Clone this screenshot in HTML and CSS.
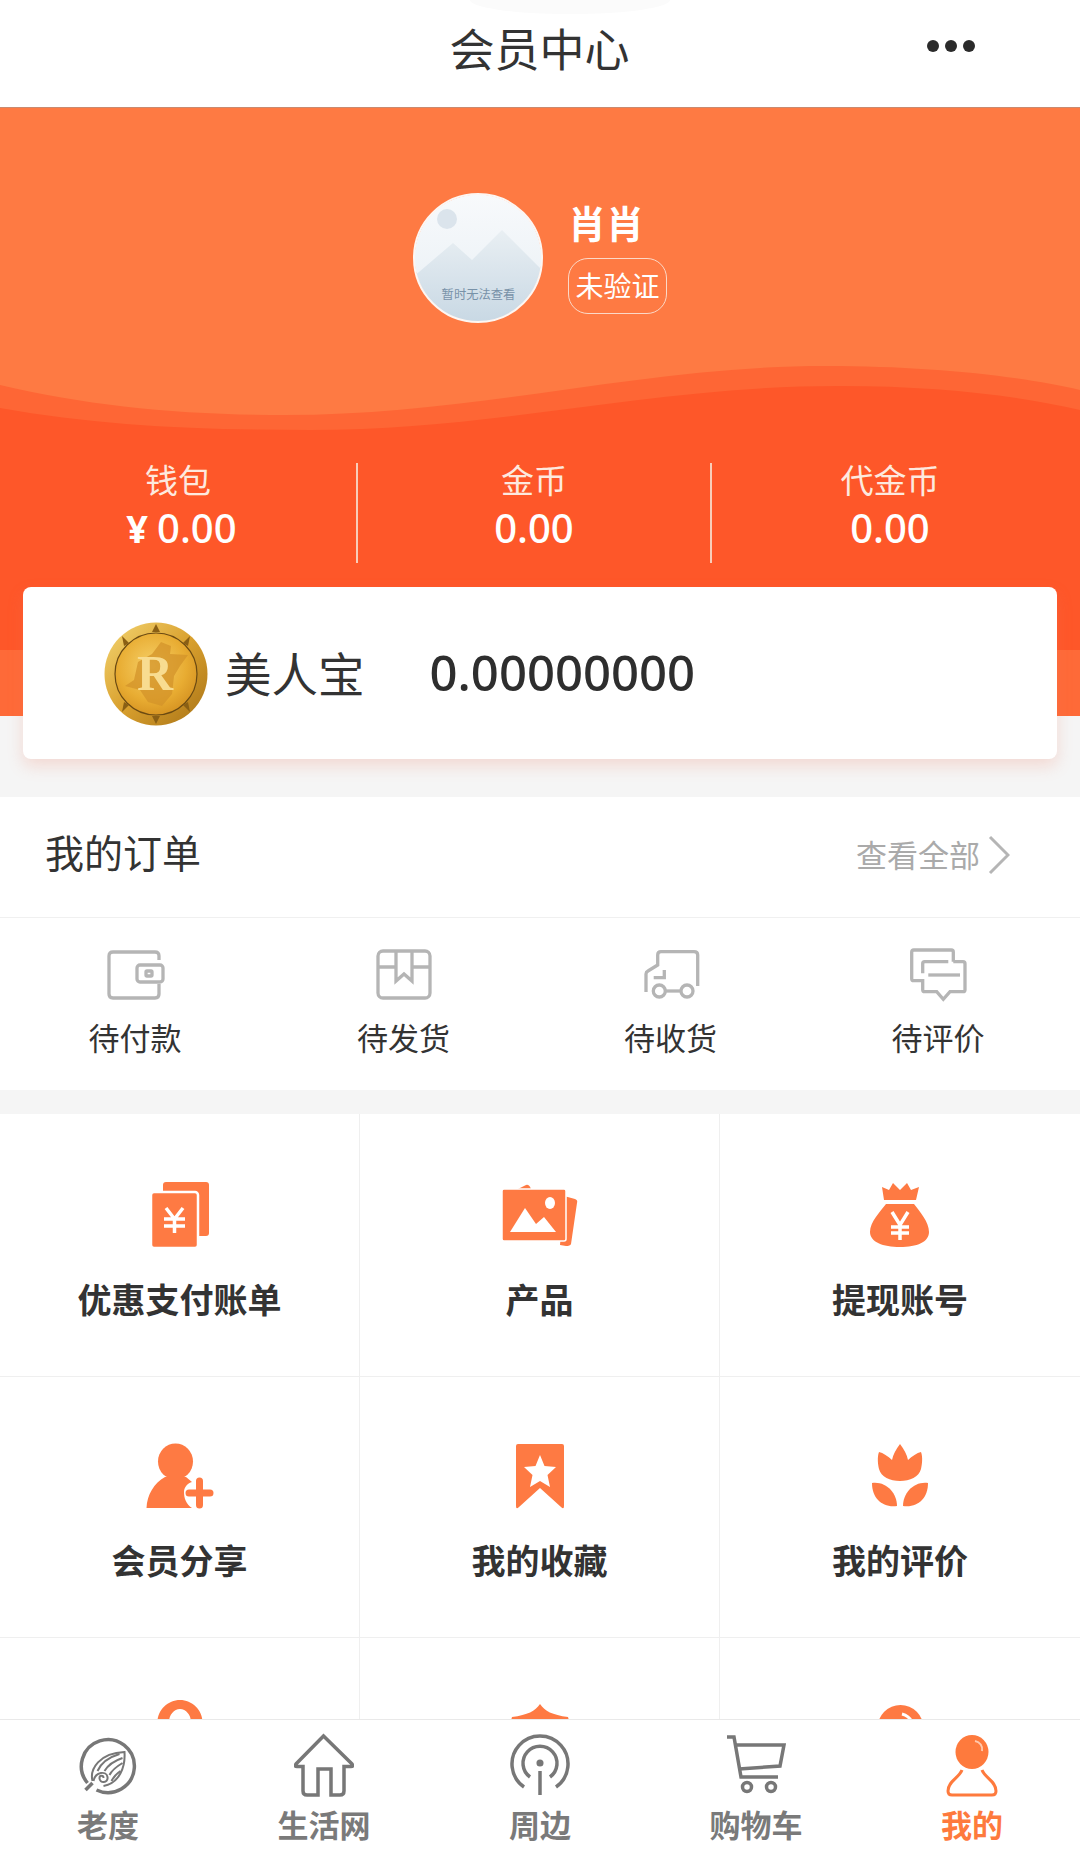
FILE: index.html
```html
<!DOCTYPE html>
<html lang="zh-CN">
<head>
<meta charset="utf-8">
<title>会员中心</title>
<link rel="stylesheet" href="styles.css">
</head>
<body>
<div class="app">
  <header class="topbar">
    <span></span>
    <h1 class="topbar-title">会员中心</h1>
    <div class="more"><i></i><i></i><i></i></div>
  </header>

  <section class="top">
    <svg class="hero-bg" viewBox="0 0 1080 608" preserveAspectRatio="none" aria-hidden="true">
      <rect width="1080" height="608" fill="#fe7a43"/>
      <path d="M0 277C90 298 180 307 285 307C480 307 640 258 826 258C930 258 1020 268 1080 282V608H0Z" fill="#fe6635"/>
      <path d="M0 300C100 318 200 322 310 322C500 322 650 278 840 278C940 278 1020 288 1080 302V608H0Z" fill="#fe5729"/>
      <rect y="542" width="1080" height="66" fill="#fe6a38"/>
    </svg>

    <div class="profile">
      <svg class="avatar" viewBox="0 0 130 130" aria-hidden="true">
        <defs>
          <linearGradient id="sky" x1="0" y1="0" x2="0" y2="1">
            <stop offset="0" stop-color="#f8fafc"/>
            <stop offset="0.6" stop-color="#eef3f7"/>
            <stop offset="1" stop-color="#dfe7ee"/>
          </linearGradient>
          <linearGradient id="hill" x1="0" y1="0" x2="0" y2="1">
            <stop offset="0" stop-color="#e9eff3"/>
            <stop offset="1" stop-color="#c8d8e4"/>
          </linearGradient>
          <clipPath id="round"><circle cx="65" cy="65" r="63.5"/></clipPath>
        </defs>
        <g clip-path="url(#round)">
          <rect width="130" height="130" fill="url(#sky)"/>
          <circle cx="34" cy="26" r="10" fill="#dbe4ec"/>
          <path d="M0 84L40 50L59 67L89 37L130 78V130H0Z" fill="url(#hill)"/>
          <text class="avatar-text" x="65.500" y="106" text-anchor="middle">暂时无法查看</text>
        </g>
        <circle cx="65" cy="65" r="64" fill="none" stroke="#fdf6f2" stroke-width="2"/>
      </svg>
      <div class="profile-info">
        <div class="profile-name">肖肖</div>
        <div class="badge">未验证</div>
      </div>
    </div>

    <div class="stats">
      <div class="stat">
        <div class="stat-label">钱包</div>
        <div class="stat-value stat-money"><span class="yen">¥</span>0.00</div>
      </div>
      <div class="stat">
        <div class="stat-label">金币</div>
        <div class="stat-value">0.00</div>
      </div>
      <div class="stat">
        <div class="stat-label">代金币</div>
        <div class="stat-value">0.00</div>
      </div>
    </div>

    <div class="coin-card">
      <svg class="coin" viewBox="0 0 104 104" aria-hidden="true">
        <defs>
          <radialGradient id="coinFace" cx="0.45" cy="0.4" r="0.7">
            <stop offset="0" stop-color="#f6d068"/>
            <stop offset="0.6" stop-color="#e8ac32"/>
            <stop offset="1" stop-color="#cf8a1c"/>
          </radialGradient>
          <linearGradient id="coinRing" x1="0" y1="0" x2="1" y2="1">
            <stop offset="0" stop-color="#f4d673"/>
            <stop offset="0.5" stop-color="#d9a02e"/>
            <stop offset="1" stop-color="#a87316"/>
          </linearGradient>
        </defs>
        <circle cx="52" cy="52" r="51.500" fill="url(#coinRing)"/>
        <circle cx="52" cy="52" r="41" fill="url(#coinFace)" stroke="#6b4a12" stroke-width="1.200"/>
        <path d="M21 64L30 58L34 40L48 32L57 20L67 24L66 32L84 33L76 44L70 54L68 72L58 84L44 80L36 68Z" fill="#d3932a" opacity=".75"/>
        <g fill="#8a5f14">
          <path d="M52 2l4 8h-8z"/><path d="M52 102l4-8h-8z"/>
          <path d="M18 14l7 7-5 3z"/><path d="M86 14l-7 7 5 3z"/>
          <path d="M18 90l7-7-5-3z"/><path d="M86 90l-7-7 5-3z"/>
        </g>
        <text class="coin-letter" x="51" y="68" text-anchor="middle">R</text>
      </svg>
      <span class="coin-name">美人宝</span>
      <span class="coin-value">0.00000000</span>
    </div>
  </section>

  <section class="orders">
    <div class="orders-head">
      <h2 class="orders-title">我的订单</h2>
      <div class="orders-all">
        <span>查看全部</span>
        <svg class="chevron" viewBox="0 0 22 40" aria-hidden="true"><path d="M2 2L20 20L2 38"/></svg>
      </div>
    </div>
    <div class="orders-row">
      <div class="order-item">
        <svg class="order-icon" viewBox="0 0 60 54" aria-hidden="true">
          <path d="M54 12V8Q54 4 50 4H8Q4 4 4 8V46Q4 50 8 50H50Q54 50 54 46V36"/>
          <rect x="32" y="17" width="26" height="17" rx="3"/>
          <rect x="41" y="23" width="6" height="5" rx="1"/>
        </svg>
        <span>待付款</span>
      </div>
      <div class="order-item">
        <svg class="order-icon" viewBox="0 0 60 54" aria-hidden="true">
          <rect x="4" y="3" width="52" height="47" rx="5"/>
          <path d="M4 19H22M38 19H56"/>
          <path d="M22 3V33L30 26L38 33V3"/>
        </svg>
        <span>待发货</span>
      </div>
      <div class="order-item">
        <svg class="order-icon" viewBox="0 0 60 54" aria-hidden="true">
          <path d="M5 44V26Q5 24 7 23L16.700 17V7Q16.700 3.700 20 3.700H53Q56.700 3.700 56.700 7V38"/>
          <circle cx="18.300" cy="43" r="6"/>
          <circle cx="46" cy="43" r="6"/>
          <path d="M24.300 43H40"/>
          <path d="M23.300 22V29.700H12.700"/>
        </svg>
        <span>待收货</span>
      </div>
      <div class="order-item">
        <svg class="order-icon" viewBox="0 0 60 54" aria-hidden="true">
          <path d="M15.300 32.700H5.700Q3.700 32.700 3.700 30.700V4Q3.700 2 5.700 2H43.300Q45.300 2 45.300 4V13.700"/>
          <path d="M40.300 13.700H16.700Q14.700 13.700 14.700 15.700V25.300"/>
          <path d="M14.700 31V41.700Q14.700 43.700 16.700 43.700H28.700L35.300 51.300L42 43.700H55Q57 43.700 57 41.700V15.700Q57 13.700 55 13.700H45.300"/>
          <path d="M20.300 27H52"/>
        </svg>
        <span>待评价</span>
      </div>
    </div>
  </section>

  <section class="menu">
    <div class="menu-cell">
      <svg class="menu-icon" viewBox="0 0 80 72" aria-hidden="true">
        <rect x="23" y="2" width="46" height="54" rx="3" fill="#fe7a43"/>
        <rect x="11" y="12" width="47" height="56" rx="3" fill="#fe7a43" stroke="#fff" stroke-width="2.500"/>
        <path class="glyph-line" d="M26 28L34.500 39L43 28M34.500 39V53M24 39H45M24 46H45"/>
      </svg>
      <span>优惠支付账单</span>
    </div>
    <div class="menu-cell">
      <svg class="menu-icon" viewBox="0 0 80 72" aria-hidden="true">
        <path d="M18 9L26 5Q29 4 31 9Z" fill="#fe7a43"/>
        <path d="M64 16L75 19Q78 20 77 23L71 64Q70 66 66 66L60 65Z" fill="#fe7a43"/>
        <rect x="2" y="9" width="64" height="52" rx="2" fill="#fe7a43" stroke="#fff" stroke-width="1.500"/>
        <ellipse cx="50" cy="23" rx="5" ry="6" fill="#fff"/>
        <path d="M10 52L25 28L36 44L44 37L56 52Z" fill="#fff"/>
      </svg>
      <span>产品</span>
    </div>
    <div class="menu-cell">
      <svg class="menu-icon" viewBox="0 0 80 72" aria-hidden="true">
        <path d="M22 7L29 10L33 3L40 10L47 3L51 10L59 7L56 20H24Z" fill="#fe7a43"/>
        <path d="M26 24H54C60 32 69 42 69 52C69 62 57 67 40 67C23 67 10 62 10 52C10 42 20 32 26 24Z" fill="#fe7a43"/>
        <path class="glyph-line" d="M32 32L40 45L48 32M40 45V60M31 47H49M31 53H49"/>
      </svg>
      <span>提现账号</span>
    </div>
    <div class="menu-cell menu-cell-low">
      <svg class="menu-icon" viewBox="0 0 80 72" aria-hidden="true">
        <ellipse cx="35.500" cy="18.500" rx="17.500" ry="18" fill="#fe7a43"/>
        <path d="M25 34C14 40 7 52 6.500 65H52C46 61 44 55 44 49C44 44 48 40 52 39L46 34Z" fill="#fe7a43"/>
        <path class="plus" d="M49 50H70M59.500 38V62"/>
      </svg>
      <span>会员分享</span>
    </div>
    <div class="menu-cell menu-cell-low">
      <svg class="menu-icon" viewBox="0 0 80 72" aria-hidden="true">
        <path d="M16 3Q16 1 18 1H62Q64 1 64 3V63Q64 67 61 64L40 45L19 64Q16 67 16 63Z" fill="#fe7a43"/>
        <path d="M40 12L44.500 23L56 24L47.500 32L50 44L40 38L30 44L32.500 32L24 24L35.500 23Z" fill="#fff"/>
      </svg>
      <span>我的收藏</span>
    </div>
    <div class="menu-cell menu-cell-low">
      <svg class="menu-icon" viewBox="0 0 80 72" aria-hidden="true">
        <path d="M40 1C44 6 47 12 48 17C52 13 57 10 61 9C63 14 62 22 61 26C59 34 50 38 40 38C30 38 21 34 19 26C18 22 17 14 19 9C23 10 28 13 32 17C33 12 36 6 40 1Z" fill="#fe7a43"/>
        <path d="M37 63C22 65 12 55 12 40C26 38 37 50 37 63Z" fill="#fe7a43"/>
        <path d="M43 63C58 65 68 55 68 40C54 38 43 50 43 63Z" fill="#fe7a43"/>
      </svg>
      <span>我的评价</span>
    </div>
    <div class="menu-cell">
      <svg class="menu-icon" viewBox="0 0 80 72" aria-hidden="true">
        <path fill-rule="evenodd" d="M40 -4C52 -4 62.500 6 62.500 18C62.500 30 52 40 40 40C28 40 17.500 30 17.500 18C17.500 6 28 -4 40 -4ZM40 5C34 5 29 11 29 18C29 25 34 31 40 31C46 31 51 25 51 18C51 11 46 5 40 5Z" fill="#fe7a43"/>
      </svg>
    </div>
    <div class="menu-cell">
      <svg class="menu-icon" viewBox="0 0 80 72" aria-hidden="true">
        <path d="M40 0C45 7 52 11 68 13L70 20H10L12 13C28 11 35 7 40 0Z" fill="#fe7a43"/>
      </svg>
    </div>
    <div class="menu-cell">
      <svg class="menu-icon" viewBox="0 0 80 72" aria-hidden="true">
        <circle cx="40.500" cy="24" r="23" fill="#fe7a43"/>
        <path d="M42 10C46 11 50 14 52 18" fill="none" stroke="#fff" stroke-width="3"/>
      </svg>
    </div>
  </section>

  <nav class="tabbar">
    <div class="tab">
      <svg class="tab-icon" viewBox="0 0 60 64" aria-hidden="true">
        <g transform="translate(1.500 0)">
          <path d="M8 50A26.500 26.500 0 1 1 17 57"/>
          <path d="M6 57L13 50"/>
          <path class="thin" d="M13 48C10 36 20 20 45 19C46 34 40 50 24 53"/>
          <path class="thin" d="M40 21C30 24 22 29 18 38M43 25C34 28 28 33 25 38M43 30C38 33 33 36 30 42M41 38C38 40 35 42 32 48"/>
          <path class="thin" d="M14 48C16 38 27 38 28 44C29 50 20 51 20 45C20 42 24 42 24 45"/>
        </g>
      </svg>
      <span>老度</span>
    </div>
    <div class="tab">
      <svg class="tab-icon" viewBox="0 0 60 64" aria-hidden="true">
        <path d="M29.500 3L2 31Q0 33.500 3 33.500H9V58Q9 62 13 62H24V36H37V62H46Q50 62 50 58V33.500H57Q60 33.500 58 31Z"/>
      </svg>
      <span>生活网</span>
    </div>
    <div class="tab">
      <svg class="tab-icon" viewBox="0 0 60 64" aria-hidden="true">
        <path d="M14 54A28 28 0 1 1 46 54"/>
        <path d="M20 44A17 17 0 1 1 40 44"/>
        <circle cx="30" cy="30" r="1.800"/>
        <path d="M30 38V62"/>
      </svg>
      <span>周边</span>
    </div>
    <div class="tab">
      <svg class="tab-icon" viewBox="0 0 60 64" aria-hidden="true">
        <path d="M1 4H8L15 44H52"/>
        <path d="M9 12H58L54 33L13 36"/>
        <circle cx="21" cy="54" r="4.500"/>
        <circle cx="45" cy="54" r="4.500"/>
      </svg>
      <span>购物车</span>
    </div>
    <div class="tab tab-active">
      <svg class="tab-icon" viewBox="0 0 60 64" aria-hidden="true">
        <ellipse class="me-head" cx="30" cy="19" rx="16.500" ry="17"/>
        <path class="me-shine" d="M33 8C38 9 41 13 40 18"/>
        <path class="me-body" d="M20 37C17 45 6 48 6 58Q6 62 10 62H50Q54 62 54 58C54 48 43 45 40 37"/>
      </svg>
      <span>我的</span>
    </div>
  </nav>
</div>
</body>
</html>
```
FILE: styles.css
```css
* { box-sizing: border-box; }

html, body { margin: 0; padding: 0; background: #fff; }

body {
  font-family: "Noto Sans CJK SC", "Noto Sans", sans-serif;
  color: #333;
}

.app {
  position: relative;
  width: 1080px;
  height: 1860px;
  overflow: hidden;
  background: #f5f5f5;
}

/* top bar */
.topbar {
  position: relative;
  display: grid;
  grid-template-columns: 1fr auto 1fr;
  align-items: center;
  height: 108px;
  padding-bottom: 11px;
  background: #fff;
  border-bottom: 1px solid #c98a70;
}

.topbar::before {
  content: "";
  position: absolute;
  left: 470px;
  top: -14px;
  width: 200px;
  height: 28px;
  border-radius: 50%;
  background: #fbfbfb;
}

.topbar-title {
  position: relative;
  margin: 0 0 0 -1px;
  font-size: 45px;
  font-weight: 400;
  line-height: 60px;
  color: #333;
}

.more {
  display: flex;
  justify-content: flex-end;
  gap: 6px;
  padding-right: 105px;
  margin-top: -5px;
}

.more i {
  width: 12px;
  height: 12px;
  border-radius: 50%;
  background: #2b2b2b;
}

/* hero */
.top {
  position: relative;
  padding: 85px 23px 38px;
}

.hero-bg {
  position: absolute;
  left: 0;
  top: 0;
  width: 1080px;
  height: 608px;
}

.profile {
  position: relative;
  display: flex;
  justify-content: center;
  gap: 25px;
  height: 130px;
}

.avatar { width: 130px; height: 130px; }

.avatar-text {
  font-size: 12.300px;
  fill: #7892a8;
}

.profile-info {
  display: flex;
  flex-direction: column;
  align-items: flex-start;
  padding-top: 6px;
}

.profile-name {
  font-size: 38px;
  font-weight: 700;
  line-height: 46px;
  color: #fff;
}

.badge {
  margin-top: 13px;
  width: 99px;
  height: 56px;
  border: 1px solid #fbd9c8;
  border-radius: 20px;
  font-size: 28px;
  line-height: 52px;
  text-align: center;
  color: #fff;
}

.stats {
  position: relative;
  display: grid;
  grid-template-columns: 358px 354px 1fr;
  height: 100px;
  margin: 140px -23px 0;
}

.stat {
  display: flex;
  flex-direction: column;
  align-items: center;
  color: #fff;
  border-right: 2px solid #f8cdb9;
}

.stat:last-child {
  border-right: 0;
  padding-right: 12px;
}

.stat-label {
  font-size: 33px;
  line-height: 40px;
  margin-top: -4px;
  color: #fde9df;
}

.stat-value {
  font-family: "Noto Sans", sans-serif;
  font-size: 40px;
  font-weight: 500;
  line-height: 48px;
  margin-top: 5px;
}

.stat-money { padding-left: 7px; }

.yen { margin-right: 9px; font-size: 38px; font-weight: 700; }

.coin-card {
  position: relative;
  display: flex;
  align-items: center;
  height: 172px;
  margin-top: 24px;
  padding-left: 81px;
  border-radius: 8px;
  background: #fff;
  box-shadow: 0 7px 16px rgba(235, 120, 90, 0.22);
}

.coin { width: 104px; height: 104px; flex: none; margin-top: 2px; }

.coin-letter {
  font-family: "Liberation Serif", serif;
  font-size: 50px;
  font-weight: 700;
  fill: #f8dc90;
}

.coin-name {
  margin-left: 17px;
  margin-bottom: 4px;
  font-size: 46.500px;
  color: #333;
}

.coin-value {
  margin-left: 65px;
  margin-bottom: 2px;
  font-family: "Noto Sans", sans-serif;
  font-size: 49px;
  font-weight: 500;
  color: #2e2e2e;
}

/* orders */
.orders { background: #fff; }

.orders-head {
  display: flex;
  align-items: center;
  justify-content: space-between;
  height: 121px;
  padding: 0 70px 8px 46px;
  border-bottom: 1px solid #f0f0f0;
}

.orders-title {
  margin: 0 0 4px -1px;
  font-size: 39px;
  font-weight: 400;
  color: #333;
}

.orders-all {
  display: flex;
  align-items: center;
  gap: 8px;
  font-size: 31px;
  color: #aaa;
}

.chevron {
  width: 22px;
  height: 40px;
  margin-top: 4px;
  fill: none;
  stroke: #b5b5b5;
  stroke-width: 3;
}

.orders-row {
  display: grid;
  grid-template-columns: 270px 267px 267px 268px;
  height: 172px;
  padding-top: 30px;
}

.order-item {
  display: flex;
  flex-direction: column;
  align-items: center;
  font-size: 31px;
  line-height: 44px;
  color: #333;
}

.order-item span { margin-top: 13px; }

.order-icon {
  width: 60px;
  height: 54px;
  fill: none;
  stroke: #b5b5b5;
  stroke-width: 3.300;
}

/* menu grid */
.menu {
  display: grid;
  grid-template-columns: 360px 360px 360px;
  grid-template-rows: 263px 261px 261px;
  margin-top: 24px;
  background: #fff;
}

.menu-cell {
  display: flex;
  flex-direction: column;
  align-items: center;
  padding-top: 66px;
  border-right: 1px solid #efefef;
  border-bottom: 1px solid #efefef;
  font-size: 34px;
  font-weight: 700;
  line-height: 40px;
  color: #333;
}

.menu-cell:nth-child(3n) { border-right: 0; }

.menu-cell span { margin-top: 27px; }

.menu-cell-low span { margin-top: 25px; }

.menu-icon { width: 80px; height: 72px; overflow: visible; flex: none; }

.glyph-line {
  fill: none;
  stroke: #fff;
  stroke-width: 3.500;
}

.plus {
  fill: none;
  stroke: #fe7a43;
  stroke-width: 7;
  stroke-linecap: round;
}

/* tab bar */
.tabbar {
  position: absolute;
  left: 0;
  right: 0;
  bottom: 0;
  display: grid;
  grid-template-columns: repeat(5, 216px);
  height: 141px;
  padding-top: 13px;
  background: #fff;
  border-top: 1px solid #e9e9e9;
}

.tab {
  display: flex;
  flex-direction: column;
  align-items: center;
  font-size: 31px;
  font-weight: 700;
  line-height: 42px;
  color: #7a7a7a;
}

.tab span { margin-top: 6px; }

.tab-icon {
  width: 60px;
  height: 64px;
  fill: none;
  stroke: #777;
  stroke-width: 3.500;
}

.thin { stroke-width: 2; }

.tab-active { color: #fe7a3d; }

.tab-active .tab-icon { stroke: #fe7a3d; }

.me-head { fill: #fe7a3d; stroke: none; }

.me-shine { stroke: #ffc9ae; stroke-width: 2; }

.me-body { stroke-width: 3; }
```
